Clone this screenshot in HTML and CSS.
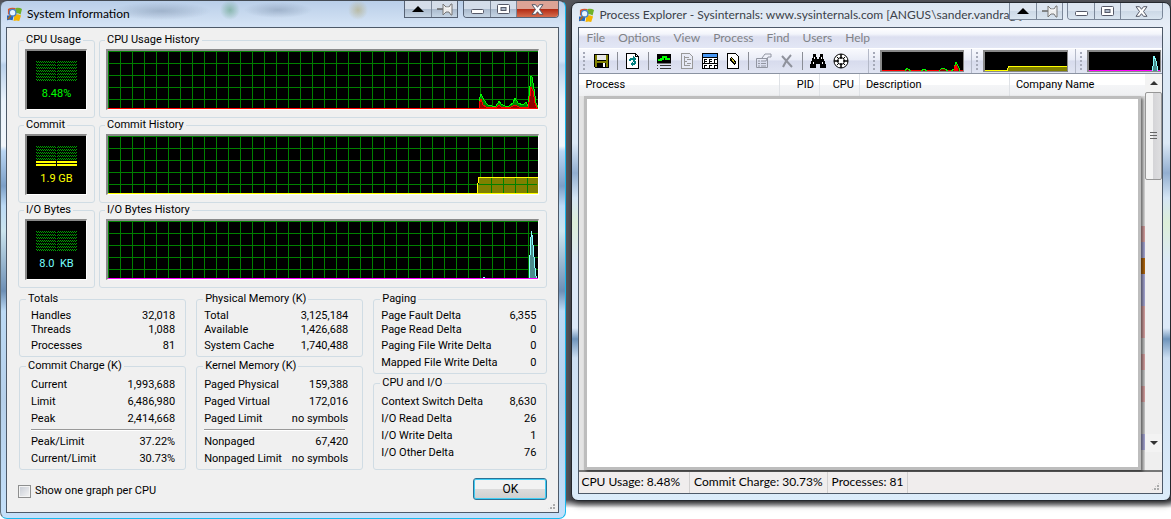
FILE: index.html
```html
<!DOCTYPE html>
<html lang="en">
<head>
<meta charset="utf-8">
<title>System Information</title>
<link rel="stylesheet" href="styles.css">
</head>
<body>
<svg class="defs" width="0" height="0" aria-hidden="true">
  <defs>
    <pattern id="dither" width="2" height="3" patternUnits="userSpaceOnUse">
      <path d="M0 0h1v1H0zM1 1h1v1H1z" fill="#00a000"/>
    </pattern>
    <pattern id="grid" width="12" height="12" patternUnits="userSpaceOnUse">
      <path d="M0 0h12v1H1v11H0z" fill="#008000" shape-rendering="crispEdges"/>
    </pattern>
    <symbol id="logo" viewBox="0 0 16 16">
      <path d="M9 1q4-1 7 1l-1.500 6q-3-2-6-1z" fill="#6fb22a"/>
      <path d="M8 8q3-1 7 1l-2 6q-3-1-6 0z" fill="#f5b400"/>
      <path d="M1 2q3-2 8-1L7 8q-3-1-6 0z" fill="#df5426"/>
      <path d="M0 9h7l-1 5q-3-1-6 0z" fill="#2468c0"/>
      <circle cx="6" cy="6" r="3.500" fill="#e6f4ff" stroke="#4a7fc4" stroke-width="1.400"/>
      <path d="M4 9l-3 4" stroke="#a46a27" stroke-width="2"/>
    </symbol>
    <symbol id="roll" viewBox="0 0 12 6"><path d="M6 0l6 6H0z"/></symbol>
    <symbol id="pin" viewBox="0 0 16 13">
      <path d="M0 6h6" stroke="#666" stroke-width="1.500"/>
      <path d="M6 1v11l3-3h3l2 3h1V1h-1l-2 3H9z" fill="#eee" stroke="#777"/>
      <path d="M9 5h4" stroke="#fff"/>
    </symbol>
    <symbol id="min" viewBox="0 0 13 5"><rect x=".5" y=".5" width="12" height="4" rx="1" fill="#fff" stroke="#555968"/></symbol>
    <symbol id="max" viewBox="0 0 13 10">
      <rect x=".5" y=".5" width="12" height="9" rx="1" fill="#fff" stroke="#555968"/>
      <rect x="4" y="3.5" width="5" height="3" fill="#aeb9ca" stroke="#555968"/>
    </symbol>
    <symbol id="close" viewBox="0 0 13 11">
      <path d="M1 .7h3.500l2 2.600 2-2.600H12L8.500 5.500l3.500 4.800H8.500l-2-2.600-2 2.600H1l3.500-4.800z" fill="#fff" stroke="#555968"/>
    </symbol>
  </defs>
</svg>

<main class="desktop">
  <section class="window active" aria-label="System Information">
    <header class="titlebar">
      <svg class="logo"><use href="#logo"/></svg>
      <h1 class="title">System Information</h1>
      <div class="caption">
        <div class="group extra">
          <button class="cap" aria-label="Roll up"><svg width="12" height="6"><use href="#roll"/></svg></button>
          <button class="cap" aria-label="Pin"><svg width="16" height="13"><use href="#pin"/></svg></button>
        </div>
        <div class="group">
          <button class="cap low" aria-label="Minimize"><svg width="13" height="5"><use href="#min"/></svg></button>
          <button class="cap" aria-label="Maximize"><svg width="13" height="10"><use href="#max"/></svg></button>
          <button class="cap close" aria-label="Close"><svg width="13" height="11"><use href="#close"/></svg></button>
        </div>
      </div>
    </header>

    <div class="client dialog">
      <div class="meters">
        <fieldset><legend>CPU Usage</legend>
          <div class="gauge lime"><svg width="41" height="20" shape-rendering="crispEdges"><path d="M0 0h20v20H0zM21 0h20v20H21z" fill="url(#dither)"/></svg><span>8.48%</span></div>
        </fieldset>
        <fieldset><legend>CPU Usage History</legend>
          <div class="graph cpu"><svg class="grid"><rect width="100%" height="100%" fill="url(#grid)"/></svg><svg class="plot" width="60" height="58" viewBox="479 51 60 58" shape-rendering="crispEdges">
            <path d="M480 109V100L482 94L484 98L487 103L489 105L493 106L497 106L500 101L502 104L506 106L510 106L514 103L516 98L519 103L524 105L527 102L529 106L531 86L532 76L533 77L535 89L537 103L539 107V109z" fill="#008000" stroke="#0f0"/>
            <path d="M480 109V104L482 99L484 105L487 107L498 107L500 105L502 107L512 107L516 105L520 107L529 108L531 96L532 87L534 91L536 103L538 108z" fill="#900000" stroke="red"/>
          </svg></div>
        </fieldset>
        <fieldset><legend>Commit</legend>
          <div class="gauge yellow"><svg width="41" height="20" shape-rendering="crispEdges"><path d="M0 0h20v14H0zM21 0h20v14H21z" fill="url(#dither)"/><path d="M0 15h20v2H0zM21 15h20v2H21zM0 18h20v2H0zM21 18h20v2H21z" fill="#ff0"/></svg><span>1.9 GB</span></div>
        </fieldset>
        <fieldset><legend>Commit History</legend>
          <div class="graph commit"><svg class="grid"><rect width="100%" height="100%" fill="url(#grid)"/></svg><svg class="plot" width="61" height="58" viewBox="0 0 61 58" shape-rendering="crispEdges">
            <path d="M2 41h59v17H1z" fill="#808000"/>
            <path d="M2 48.500h58M14.500 42v15M26.500 42v15M38.500 42v15M50.500 42v15" stroke="#008000"/>
            <path d="M.5 58V50L2 41.500h59" fill="none" stroke="#ff0"/>
          </svg></div>
        </fieldset>
        <fieldset><legend>I/O Bytes</legend>
          <div class="gauge cyan"><svg width="41" height="20" shape-rendering="crispEdges"><path d="M0 0h20v20H0zM21 0h20v20H21z" fill="url(#dither)"/></svg><span>8.0&nbsp; KB</span></div>
        </fieldset>
        <fieldset><legend>I/O Bytes History</legend>
          <div class="graph io"><svg class="grid"><rect width="100%" height="100%" fill="url(#grid)"/></svg><svg class="plot" width="60" height="58" viewBox="0 0 60 58" shape-rendering="crispEdges">
            <path d="M51.500 58V46L52.500 22L53.500 10L54.500 17L55.500 30L56.500 42L57.500 52L58.500 57" fill="#4b8c8c" stroke="#8ff"/>
            <path d="M5 56h2v1H5z" fill="#8ff"/>
          </svg></div>
        </fieldset>
      </div>

      <div class="stats">
        <div class="column indent">
          <fieldset class="top"><legend>Totals</legend>
            <table>
              <tr><th>Handles</th><td>32,018</td></tr>
              <tr><th>Threads</th><td>1,088</td></tr>
              <tr><th>Processes</th><td>81</td></tr>
            </table>
          </fieldset>
          <fieldset class="fill"><legend>Commit Charge (K)</legend>
            <table>
              <tr><th>Current</th><td>1,993,688</td></tr>
              <tr><th>Limit</th><td>6,486,980</td></tr>
              <tr><th>Peak</th><td>2,414,668</td></tr>
            </table>
            <hr>
            <table>
              <tr><th>Peak/Limit</th><td>37.22%</td></tr>
              <tr><th>Current/Limit</th><td>30.73%</td></tr>
            </table>
          </fieldset>
        </div>
        <div class="column middle">
          <fieldset class="top"><legend>Physical Memory (K)</legend>
            <table>
              <tr><th>Total</th><td>3,125,184</td></tr>
              <tr><th>Available</th><td>1,426,688</td></tr>
              <tr><th>System Cache</th><td>1,740,488</td></tr>
            </table>
          </fieldset>
          <fieldset class="fill"><legend>Kernel Memory (K)</legend>
            <table>
              <tr><th>Paged Physical</th><td>159,388</td></tr>
              <tr><th>Paged Virtual</th><td>172,016</td></tr>
              <tr><th>Paged Limit</th><td>no symbols</td></tr>
            </table>
            <hr>
            <table>
              <tr><th>Nonpaged</th><td>67,420</td></tr>
              <tr><th>Nonpaged Limit</th><td>no symbols</td></tr>
            </table>
          </fieldset>
        </div>
        <div class="column">
          <fieldset class="top"><legend>Paging</legend>
            <table>
              <tr><th>Page Fault Delta</th><td>6,355</td></tr>
              <tr><th>Page Read Delta</th><td>0</td></tr>
              <tr><th>Paging File Write Delta</th><td>0</td></tr>
              <tr><th>Mapped File Write Delta</th><td>0</td></tr>
            </table>
          </fieldset>
          <fieldset class="fill"><legend>CPU and I/O</legend>
            <table>
              <tr><th>Context Switch Delta</th><td>8,630</td></tr>
              <tr><th>I/O Read Delta</th><td>26</td></tr>
              <tr><th>I/O Write Delta</th><td>1</td></tr>
              <tr><th>I/O Other Delta</th><td>76</td></tr>
            </table>
          </fieldset>
        </div>
      </div>

      <div class="actions">
        <label class="check"><input type="checkbox"> Show one graph per CPU</label>
        <button class="ok">OK</button>
      </div>
      <i class="sizer"></i>
    </div>
  </section>

  <section class="window explorer" aria-label="Process Explorer">
    <header class="titlebar">
      <svg class="logo"><use href="#logo"/></svg>
      <h1 class="title">Process Explorer - Sysinternals: www.sysinternals.com [ANGUS\sander.vandrag ]</h1>
      <div class="caption">
        <div class="group extra">
          <button class="cap" aria-label="Roll up"><svg width="12" height="6"><use href="#roll"/></svg></button>
          <button class="cap" aria-label="Pin"><svg width="16" height="13"><use href="#pin"/></svg></button>
        </div>
        <div class="group">
          <button class="cap low" aria-label="Minimize"><svg width="13" height="5"><use href="#min"/></svg></button>
          <button class="cap" aria-label="Maximize"><svg width="13" height="10"><use href="#max"/></svg></button>
          <button class="cap close" aria-label="Close"><svg width="13" height="11"><use href="#close"/></svg></button>
        </div>
      </div>
    </header>

    <div class="client">
      <nav class="menu">
        <button>File</button><button>Options</button><button>View</button><button>Process</button><button>Find</button><button>Users</button><button>Help</button>
      </nav>
      <div class="rebar">
        <div class="band tools">
          <button class="tool" aria-label="Save"><svg width="16" height="16" shape-rendering="crispEdges"><path d="M0 1h15v14H1l-1-1z"/><path d="M1 2h2v6h9V2h2v12h-2v-4H3v4H1z" fill="#808000"/><path d="M3 2h9v5H3z" fill="#e8e8e8"/><path d="M9 10h2v4H9z" fill="#fff"/></svg></button>
          <i class="sep"></i>
          <button class="tool" aria-label="Refresh"><svg width="16" height="16" shape-rendering="crispEdges"><path d="M1.500 .5h9l3 3v12h-12z" fill="#fff" stroke="#000"/><path d="M10.500 .5v3h3" fill="none" stroke="#000"/><path d="M4 8V6h1V5h3V3l3 3-3 3V7H6v1zM11 8v3h-1v1H8v2l-3-3 3-3v2h1V8z" fill="#008080"/></svg></button>
          <i class="sep"></i>
          <button class="tool" aria-label="System information"><svg width="16" height="16" shape-rendering="crispEdges"><path d="M1 1h14v9H1z"/><path d="M2 7h3V6h2V4h3v2h4" stroke="#0f0" stroke-width="2" fill="none"/><path d="M1 12h1v1H1zM4 12h11v1H4zM1 15h1v1H1zM4 15h11v1H4z" fill="#333"/><path d="M1 10h14" stroke="#777"/></svg></button>
          <button class="tool" aria-label="Process tree"><svg width="16" height="16" shape-rendering="crispEdges"><path d="M2.500 .5h8l3 3v12h-11z" fill="#e8ebf6" stroke="#999"/><path d="M5.500 3v10M6 4.500h4M6 8.500h2M8 6.500h4M8 10.500h4M6 12.500h5" stroke="#999" fill="none"/></svg></button>
          <button class="tool" aria-label="Lower pane"><svg width="16" height="16" shape-rendering="crispEdges"><path d="M0 0h16v16H0z"/><path d="M1 1h14v3H1z" fill="#4797f4"/><path d="M1 5h14v5H1zM1 11h14v4H1z" fill="#fff"/><path d="M2.500 10V6.500H5M3 8.500h2M7.500 10V6.500H10M8 8.500h2M12.500 10V6.500H15M2.500 15v-2.500H5M7.500 15v-2.500H10M12.500 15v-2.500H15" stroke="#000" fill="none"/></svg></button>
          <button class="tool" aria-label="View handles"><svg width="16" height="16" shape-rendering="crispEdges"><path d="M2.500 .5h8l3 3v12h-11z" fill="#fff" stroke="#000"/><path d="M5 5l2-1 4 5v2l-2 1-4-5z"/><path d="M6 5l4 5" stroke="#d9cb35" stroke-width="1"/></svg></button>
          <i class="sep"></i>
          <button class="tool" aria-label="Properties" disabled><svg width="16" height="16"><path d="M.5 5.500h11v9H.5zM2 8h2m1 0h5M2 10.500h2m1 0h5M2 13h2m1 0h5M6 5l3-4h6v3h-3l-2 4" fill="none" stroke="#9296a2"/></svg></button>
          <button class="tool" aria-label="Kill process" disabled><svg width="16" height="16"><path d="M3 3l10 11M12 2q-5 5-8 12" fill="none" stroke="#8f929c" stroke-width="2"/></svg></button>
          <i class="sep"></i>
          <button class="tool" aria-label="Find"><svg width="16" height="16" shape-rendering="crispEdges"><path d="M3 1h3v3h1v2h2V4h1V1h3v3l1 3 2 5v3h-6v-4H6v4H0v-3l2-5 1-3z"/><path d="M4.500 4v2M3.500 9v2M11.500 4v2M12.500 9v2" stroke="#fff"/></svg></button>
          <button class="tool" aria-label="Find window"><svg width="16" height="16"><circle cx="8" cy="8" r="7" fill="#fff" stroke="#000"/><circle cx="8" cy="8" r="3.500" fill="none" stroke="#000"/><path d="M8 1v5M8 10v5M1 8h5M10 8h5" stroke="#000" stroke-width="1.500"/><path d="M4 4l2 2M12 4l-2 2M4 12l2-2M12 12l-2-2" stroke="#000"/></svg></button>
        </div>
        <div class="band"><div class="mini cpu"><svg width="60" height="19" shape-rendering="crispEdges"><path d="M2 19l2-3 4 3h10l3-2 3 2h12l3-3 3 1 3 2h3l3-2 2-7 3 6 1 3" fill="#900000" stroke="#0f0"/><path d="M51 19l1-5 1-1 2 6" stroke="red" fill="red"/></svg></div></div>
        <div class="band"><div class="mini commit"><svg width="60" height="19" shape-rendering="crispEdges"><path d="M.5 19V17L2 14.500h58V19" fill="#808000" stroke="#ff0"/></svg></div></div>
        <div class="band last"><div class="mini io"><svg width="8" height="19" shape-rendering="crispEdges"><path d="M.5 19L2 4l2 5 2 10" fill="#4b8c8c" stroke="#8ff"/></svg></div></div>
      </div>
      <div class="list">
        <div class="view">
          <table class="columns">
            <tr><th class="process">Process</th><th class="num">PID</th><th class="num">CPU</th><th class="desc">Description</th><th>Company Name</th></tr>
          </table>
          <div class="rows"><div class="blank"></div></div>
        </div>
        <div class="scroll">
          <button class="arrow" aria-label="Scroll up"><svg width="8" height="4"><path d="M4 0l4 4H0z" fill="#333"/></svg></button>
          <div class="thumb"></div>
          <button class="arrow down" aria-label="Scroll down"><svg width="8" height="4"><path d="M0 0h8L4 4z" fill="#333"/></svg></button>
        </div>
      </div>
      <footer class="status">
        <span class="usage">CPU Usage: 8.48%</span><span>Commit Charge: 30.73%</span><span>Processes: 81</span>
      </footer>
      <i class="sizer"></i>
    </div>
  </section>
</main>
</body>
</html>
```
FILE: styles.css
```css
* { box-sizing: border-box; }

body {
  margin: 0;
  font: 11px/14px Roboto, "Liberation Sans", sans-serif;
  color: #000;
  background: linear-gradient(#55565c 0 500px, #fff 508px);
}

button, input { margin: 0; font: inherit; color: inherit; }
.defs { position: absolute; }

.desktop {
  display: flex;
  align-items: flex-start;
  gap: 5px;
  min-height: 100vh;
}

.window {
  display: flex;
  flex-direction: column;
  border: 1px solid #2a3440;
  border-radius: 7px;
  min-width: 0;
}

.active {
  flex: 567 1 0;
  padding: 0 6px 5px 5px;
  border-color: #444b54 #17b9ee #17b9ee #60707c;
  background:
    radial-gradient(ellipse 50px 9px at 160px 10px, #8094ae88, transparent),
    radial-gradient(circle 10px at 229px 9px, #6ca78faa, transparent),
    radial-gradient(ellipse 34px 8px at 277px 9px, #8094ae88, transparent),
    radial-gradient(circle 10px at 357px 9px, #b4ae82aa, transparent),
    linear-gradient(#b9cee8 0, #d4e3f5 24px, #d0e2f6 60px, #b9d0ea 64px, #eaf3fc 100px, #f1f6fb 145px, #bad6f3 150px, #7c9fc7 185px, #bcdaf5 205px, #cbe4ee 230px, #6d8fb5 290px, #bcdaf5 310px, #b6d0ea 400px, #c4e0fa);
  min-height: 517px;
}

.explorer {
  flex: 599 1 0;
  margin-top: 2px;
  padding: 0 7px 6px 6px;
  min-height: 499px;
  border-color: #24282e;
  background: linear-gradient(#dbe5f1 0, #e7eef7 25px, #dce9f6 60px, #dce9f6 140px, #92aed0 170px, #d5e5f4 195px, #dceed8 220px, #dce9f8 260px, #dce9f8 325px, #6f94bb 336px, #cddff2 355px, #dcecfa);
  box-shadow: 1px 3px 7px #0009;
}

.titlebar {
  display: flex;
  align-items: center;
  gap: 5px;
  height: 26px;
  padding-left: 1px;
  font-family: Lato, "Open Sans", sans-serif;
}
.explorer .titlebar { height: 24px; padding-left: 1px; }
.logo { flex: none; width: 15px; height: 15px; }
.title { flex: 1; min-width: 0; margin: 0; font-size: 12px; font-weight: 400; line-height: 18px; white-space: nowrap; }
.explorer .title { color: #3b4149; }

.caption { display: flex; gap: 5px; align-self: flex-start; position: relative; }
.explorer .caption { gap: 4px; }
.group {
  display: flex;
  border: 1px solid #566274;
  border-top: 0;
  border-radius: 0 0 4px 4px;
  overflow: hidden;
}
.explorer .group { border-color: #7b8799; }
.extra { border-radius: 0; }
.cap {
  display: flex;
  align-items: center;
  justify-content: center;
  width: 26px;
  height: 16px;
  padding: 0;
  border: 0;
  background: linear-gradient(#d4dde9 50%, #a9b9cc 50%, #c6d5e5);
}
.explorer .cap { background: linear-gradient(#dce5f0 50%, #ccd8e6 50%, #dae5f0); }
.cap + .cap { border-left: 1px solid #7b8799; }
.low { align-items: flex-end; padding-bottom: 3px; }
.cap.close { width: 42px; }
.active .close { background: linear-gradient(#dda395 50%, #b22912 50%, #d66c4d); }

.client { flex: 1; display: flex; flex-direction: column; position: relative; border: 1px solid #4d5968; background: #f0f0f0; min-width: 0; }

.dialog { padding: 5px 11px 12px 11px; }
fieldset {
  min-width: 0;
  margin: 0;
  padding: 2px 7px 7px 6px;
  border: 1px solid #d0dce4;
  border-radius: 3px;
}
legend { padding: 0 2px; margin-left: -1px; white-space: nowrap; }

.meters { display: grid; grid-template-columns: 77px 1fr; column-gap: 4px; }
.gauge, .graph { height: 61px; border: 2px solid; border-color: #8a8a8a #fff #fff #8a8a8a; border-right-width: 1px; border-bottom-width: 1px; background-color: #000; }
.gauge { display: flex; flex-direction: column; align-items: center; gap: 6px; padding-top: 10px; }
.lime { color: #0f0; }
.yellow { color: #ff0; }
.cyan { color: #7ff; }
.graph {
  display: flex;
  justify-content: flex-end;
  position: relative;
}
.grid { position: absolute; inset: 0; width: 100%; height: 100%; }
.graph::after, .mini::before { content: ""; position: absolute; left: 0; right: 0; bottom: 0; height: 1px; background: var(--base); }
.plot { position: relative; }
.mini svg { position: relative; }
.cpu { --base: #f00; }
.commit { --base: #ff0; }
.io { --base: #f0f; }

.stats { display: grid; grid-template-columns: 167fr 167fr 174fr; gap: 10px; margin: 4px 0 0 1px; }
.column { display: flex; flex-direction: column; gap: 2px; }
.column fieldset { padding: 3px 10px 2px 7px; }
.column.indent fieldset { padding-left: 11px; }
.column.middle fieldset { padding-right: 14px; }
.indent legend { margin-left: -5px; }
.fill { flex: 1; }
.stats table { width: 100%; border-collapse: collapse; }
.stats th, .stats td { padding: 0; height: 17px; font-weight: 400; text-align: left; white-space: nowrap; }
.stats td { text-align: right; }
.top tr:nth-child(-n+2) > * { height: 14px; }
.stats hr { height: 2px; margin: 2px 3px 2px 0; border: 0; border-top: 1px solid #999; background: #fff; }

.actions { display: flex; justify-content: space-between; align-items: flex-start; margin-top: 8px; }
.check { display: flex; align-items: center; gap: 4px; margin-top: 6px; }
.check input {
  appearance: none;
  width: 13px;
  height: 13px;
  border: 1px solid #8e8f8f;
  background: linear-gradient(135deg, #c5cad3, #f6f6f6);
  box-shadow: inset 0 0 0 1px #f4f4f4;
}
.ok {
  width: 74px;
  height: 22px;
  padding: 0;
  border: 1px solid #2b7296;
  border-radius: 3px;
  background: linear-gradient(#f2f2f2 50%, #dcdcdc 50%, #cfcfcf);
  box-shadow: inset 0 0 0 1px #40cef5;
  font-size: 12px;
}
.sizer {
  position: absolute;
  right: 2px;
  bottom: 2px;
  width: 9px;
  height: 9px;
  background: radial-gradient(circle at 1px 1px, #aaa 1px, transparent 1px) 0 0 / 3px 3px;
  clip-path: polygon(100% 0, 100% 100%, 0 100%);
}

.menu {
  display: flex;
  height: 20px;
  background: linear-gradient(#fff 0, #f3f5fb 30%, #dcdff0 45%, #e3e7f5);
}
.menu button { padding: 0 6px 0 7px; border: 0; background: none; color: #808287; font: 12px/18px Lato, "Open Sans", sans-serif; }

.rebar {
  display: grid;
  grid-template-columns: 290fr 104fr 104fr 86fr;
  height: 26px;
  border-top: 1px solid #fff;
  border-bottom: 1px solid #8b93a2;
  background: linear-gradient(#f8f9fd, #e9ecf7 45%, #d7dbed 50%, #e1e5f3);
}
.band { display: flex; align-items: center; min-width: 0; padding: 0 7px 0 11px; position: relative; border-right: 1px solid #b4b9c8; }
.band.last { padding-right: 1px; border: 0; }
.band::before { content: ""; position: absolute; left: 4px; top: 3px; bottom: 3px; width: 2px; background: repeating-linear-gradient(#a5a9b8 0 2px, transparent 2px 4px); }
.tool { flex: none; display: flex; justify-content: center; width: 23px; padding: 0; border: 0; background: none; }
.sep { width: 1px; height: 18px; margin: 0 3px 0 4px; background: #8a8d96; }
.mini { flex: 1; display: flex; justify-content: flex-end; height: 22px; position: relative; border: 1px solid #888; border-width: 2px 1px 1px 2px; background: #000; }

.list { flex: 1; display: flex; min-height: 0; background: #f0f0f0; border-bottom: 2px solid #777; }
.view { flex: 1; display: flex; flex-direction: column; min-width: 0; }
.columns { width: 100%; height: 22px; table-layout: fixed; border-collapse: collapse; background: linear-gradient(#fff 50%, #f4f5f7 52%, #eff0f2); }
.columns th { padding: 0 6px; border-right: 1px solid #dfe2e6; font-weight: 400; text-align: left; }
.columns th:last-child { border: 0; }
.columns .process { width: 200px; }
.columns .num { width: 40px; padding: 0 5px; text-align: right; }
.columns .desc { width: 150px; }
.rows {
  flex: 1;
  display: flex;
  padding: 0 4px 0 5px;
  background: linear-gradient(#ddd 0 130px, #d9a3a3 130px 146px, #a9a9d6 146px 162px, #b5690f 162px 178px, #a9a9d6 178px 210px, #d9a3a3 210px 242px, #ccc 242px 258px, #d9a3a3 258px 274px, #ccc 274px 290px, #d9a3a3 290px 306px, #ccc 306px 338px, #a9a9d6 338px 354px, #ddd 354px) right / 8px 100% no-repeat #e4e4e4;
}
.blank { flex: 1; border: 3px solid #bdbdbd; background: #fff; box-shadow: 2px 2px 3px #0008; }

.scroll { width: 17px; display: flex; flex-direction: column; align-items: stretch; padding-bottom: 18px; background: #efefef; }
.arrow { display: flex; align-items: center; justify-content: center; height: 18px; padding: 0; border: 0; background: #f3f3f3; }
.down { margin-top: auto; }
.thumb {
  height: 88px;
  border: 1px solid #979797;
  border-radius: 2px;
  background:
    repeating-linear-gradient(#666 0 1px, transparent 1px 3px) center / 7px 9px no-repeat,
    linear-gradient(90deg, #f4f4f4 45%, #d5d5d8 50%, #dedee0);
}

.status { display: flex; height: 21px; background: #f0eded; font: 12px/20px Lato, "Open Sans", sans-serif; white-space: nowrap; }
.status span { padding: 0 4px; border-right: 1px solid #d2d0d0; }
.status .usage { padding: 0 9px 0 2px; }
```
